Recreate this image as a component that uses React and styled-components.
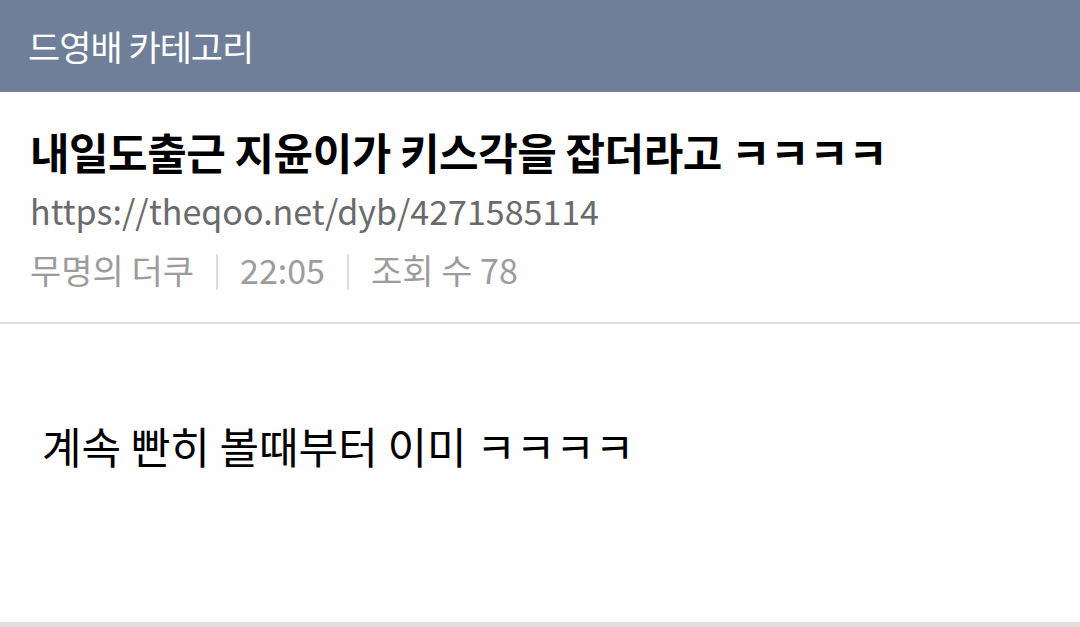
import React from "react";
import styled, { createGlobalStyle } from "styled-components";

const GlobalStyle = createGlobalStyle`
  html, body {
    margin: 0;
    padding: 0;
    background: #ffffff;
  }
  body {
    font-family: "Noto Sans CJK KR", "Noto Sans", sans-serif;
  }
`;

const Page = styled.div`
  width: 1080px;
  height: 627px;
  display: flex;
  flex-direction: column;
  overflow: hidden;
  background: #fefefe;
`;

const TopBar = styled.header`
  height: 92px;
  flex: none;
  display: flex;
  align-items: center;
  padding: 0 28px 2px;
  background: #6f7f99;
  box-sizing: border-box;
`;

const Category = styled.h1`
  margin: 0;
  color: #ffffff;
  font-size: 35px;
  font-weight: 400;
  letter-spacing: -1px;
`;

const PostHead = styled.section`
  flex: none;
  padding: 29px 30px 0;
  height: 232px;
  box-sizing: border-box;
  border-bottom: 2px solid #dddddd;
  display: flex;
  flex-direction: column;
`;

const Title = styled.h2`
  margin: 0;
  color: #000000;
  font-size: 43px;
  font-weight: 700;
  line-height: 60px;
  letter-spacing: -0.5px;
`;

const Link = styled.div`
  color: #6a6a6a;
  font-size: 34px;
  font-weight: 400;
  line-height: 60px;
`;

const Meta = styled.div`
  display: flex;
  align-items: center;
  color: #9c9c9c;
  font-size: 34px;
  font-weight: 400;
  line-height: 58px;
`;

const Divider = styled.span`
  width: 2px;
  height: 36px;
  margin: 4px 22px 0;
  background: #dddddd;
`;

const Body = styled.article`
  flex: 1;
  padding: 96px 42px 0;
  box-sizing: border-box;
`;

const Paragraph = styled.p`
  margin: 0;
  color: #000000;
  font-size: 43px;
  line-height: 50px;
`;

const Footer = styled.div`
  flex: none;
  height: 5px;
  background: #e0e0e0;
`;

export default function App() {
  return (
    <>
      <GlobalStyle />
      <Page>
        <TopBar>
          <Category>드영배 카테고리</Category>
        </TopBar>
        <PostHead>
          <Title>내일도출근 지윤이가 키스각을 잡더라고 ㅋㅋㅋㅋ</Title>
          <Link>https://theqoo.net/dyb/4271585114</Link>
          <Meta>
            <span>무명의 더쿠</span>
            <Divider />
            <span>22:05</span>
            <Divider />
            <span>조회 수 78</span>
          </Meta>
        </PostHead>
        <Body>
          <Paragraph>계속 빤히 볼때부터 이미 ㅋㅋㅋㅋ</Paragraph>
        </Body>
        <Footer />
      </Page>
    </>
  );
}
